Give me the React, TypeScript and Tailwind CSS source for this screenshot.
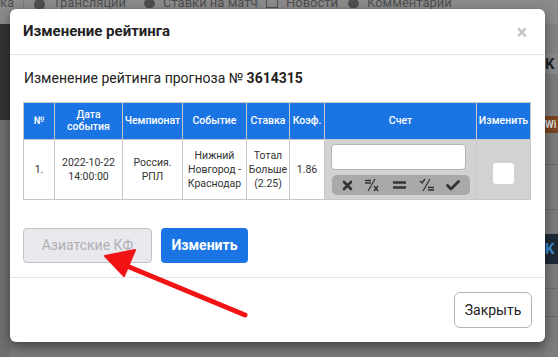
import React from "react";

const font = { fontFamily: "Roboto, 'Noto Sans', sans-serif" };

function ScoreIcon({ kind }: { kind: string }) {
  if (kind === "x")
    return (
      <svg width="11" height="11" viewBox="0 0 11 11">
        <path d="M2 2 L9 9 M9 2 L2 9" stroke="#333" strokeWidth="2.6" strokeLinecap="round" />
      </svg>
    );
  if (kind === "eqx")
    return (
      <svg width="16" height="14" viewBox="0 0 16 14">
        <path d="M1 2.5 H7 M1 5 H7" stroke="#333" strokeWidth="1.4" />
        <path d="M4 13 L11 1" stroke="#333" strokeWidth="1.2" />
        <path d="M10 8 L14 13 M14 8 L10 13" stroke="#333" strokeWidth="1.4" />
      </svg>
    );
  if (kind === "eq")
    return (
      <svg width="15" height="10" viewBox="0 0 15 10">
        <path d="M1 2.5 H14 M1 7.5 H14" stroke="#333" strokeWidth="2.6" />
      </svg>
    );
  if (kind === "veq")
    return (
      <svg width="16" height="14" viewBox="0 0 16 14">
        <path d="M1 3 L3 5 L6 1" stroke="#333" strokeWidth="1.4" fill="none" />
        <path d="M4 13 L11 1" stroke="#333" strokeWidth="1.2" />
        <path d="M9 9.5 H15 M9 12 H15" stroke="#333" strokeWidth="1.4" />
      </svg>
    );
  return (
    <svg width="14" height="11" viewBox="0 0 14 11">
      <path d="M1.5 5.5 L5 9 L12.5 1.5" stroke="#333" strokeWidth="2.8" fill="none" strokeLinecap="round" strokeLinejoin="round" />
    </svg>
  );
}

function NavItem({ icon, label, className }: { icon: React.ReactNode; label: string; className: string }) {
  return (
    <div className={"flex items-start gap-2 border-r border-[#7a7a7a] h-full whitespace-nowrap shrink-0 " + className}>
      <span className="mt-[-1px]">{icon}</span>
      <span className="mt-[-7px]">{label}</span>
    </div>
  );
}

export default function App() {
  const th = "border border-[#c7c7c7] bg-[#1b74e4] text-white font-medium text-[10.5px] leading-[12px] text-center px-0";
  const td = "border border-[#c7c7c7] text-[#333] text-[10.5px] leading-[14px] text-center px-0";

  return (
    <div className="relative w-[558px] h-[357px] overflow-hidden bg-[#777]" style={font}>
      {/* page behind the overlay */}
      <div className="flex flex-col h-full">
        <div className="flex items-start h-[24px] bg-[#8b8b8b] text-[#4f4f4f] text-[13px] leading-[20px] overflow-hidden">
          <div className="w-[24px] shrink-0 border-r border-[#7a7a7a] h-full">
            <span className="block mt-[-7px]">ка</span>
          </div>
          <NavItem
            className="w-[101px] pl-[10px]"
            icon={<span className="block w-[11px] h-[11px] rounded-full bg-[#4f4f4f]" />}
            label="Трансляции"
          />
          <NavItem
            className="w-[133px] pl-[19px]"
            icon={<span className="block w-[11px] h-[9px] rounded-full bg-[#4f4f4f]" />}
            label="Ставки на матч"
          />
          <NavItem
            className="w-[80px] pl-[8px]"
            icon={<span className="block w-[12px] h-[9px] border border-[#4f4f4f]" />}
            label="Новости"
          />
          <NavItem
            className="w-[105px] pl-[10px]"
            icon={<span className="block w-[11px] h-[9px] rounded-full bg-[#4f4f4f]" />}
            label="Комментарии"
          />
        </div>
        <div className="flex flex-1">
          <div className="w-[10px] flex flex-col">
            <div className="h-[96px] bg-[#343434]" />
            <div className="flex-1 bg-[#6f6f6f]" />
          </div>
          <div className="flex-1" />
          <div className="w-[13px] flex flex-col bg-[#7c7c7c]">
            <div className="h-[30px] bg-[#838383]" />
            <div className="h-[20px] bg-[#8a8a8a] text-[#222] font-bold text-[15px] leading-[20px] overflow-hidden">K</div>
            <div className="h-[42px]" />
            <div className="h-[17px] bg-[#7a4520] text-[#ddd] text-[10px] leading-[17px] font-bold overflow-hidden">Wi</div>
            <div className="h-[32px] border-b border-[#6a6a6a]" />
            <div className="h-[45px] border-b border-[#6a6a6a]" />
            <div className="h-[24px]" />
            <div className="h-[30px] bg-[#1d2a36] text-[#3a8ad0] font-bold text-[15px] leading-[30px] overflow-hidden">K</div>
            <div className="h-[25px] border-b border-[#6a6a6a]" />
            <div className="h-[28px] border-b border-[#6a6a6a]" />
          </div>
        </div>
      </div>

      {/* modal */}
      <div className="absolute inset-0 pl-[10px] pt-[9px]">
        <div className="w-[535px] h-[333px] bg-white rounded-[6px] shadow-[0_4px_12px_rgba(0,0,0,0.45)] flex flex-col">
          <div className="flex items-center justify-between h-[46px] px-[12px] border-b border-[#e3e3e3]">
            <span className="text-[15px] font-bold text-[#222] pl-[1px]">Изменение рейтинга</span>
            <span className="text-[20px] leading-none text-[#c4c4c4] font-bold pr-[6px]">×</span>
          </div>
          <div className="flex flex-col px-[13px] pt-[12px] pb-[14px] border-b border-[#e3e3e3] flex-1">
            <div className="text-[14px] leading-[22px] text-[#222] pl-[1px]">
              Изменение рейтинга прогноза № <b>3614315</b>
            </div>
            <table className="table-fixed border-collapse w-[507px] mt-[13px]">
              <colgroup>
                <col className="w-[31px]" />
                <col className="w-[68px]" />
                <col className="w-[60px]" />
                <col className="w-[64px]" />
                <col className="w-[43px]" />
                <col className="w-[35px]" />
                <col className="w-[152px]" />
                <col className="w-[54px]" />
              </colgroup>
              <thead>
                <tr className="h-[37px]">
                  <th className={th}>№</th>
                  <th className={th}>Дата<br />события</th>
                  <th className={th}>Чемпионат</th>
                  <th className={th}>Событие</th>
                  <th className={th}>Ставка</th>
                  <th className={th}>Коэф.</th>
                  <th className={th}>Счет</th>
                  <th className={th}>Изменить</th>
                </tr>
              </thead>
              <tbody>
                <tr className="h-[60px]">
                  <td className={td}>1.</td>
                  <td className={td}>2022-10-22<br />14:00:00</td>
                  <td className={td}>Россия.<br />РПЛ</td>
                  <td className={td}>Нижний<br />Новгород -<br />Краснодар</td>
                  <td className={td}>Тотал<br />Больше<br />(2.25)</td>
                  <td className={td}>1.86</td>
                  <td className="border border-[#c7c7c7] bg-[#d2d2d2] px-[6px] py-[4px]">
                    <div className="flex flex-col gap-[5px]">
                      <div className="h-[26px] w-[135px] bg-white rounded-[4px] border border-[#b5b5b5]" />
                      <div className="h-[20px] w-[138px] ml-[1px] bg-[#a9a9a9] rounded-[5px] flex items-center justify-around px-[4px]">
                        <ScoreIcon kind="x" />
                        <ScoreIcon kind="eqx" />
                        <ScoreIcon kind="eq" />
                        <ScoreIcon kind="veq" />
                        <ScoreIcon kind="v" />
                      </div>
                    </div>
                  </td>
                  <td className="border border-[#c7c7c7] bg-[#d2d2d2]">
                    <div className="flex justify-center pt-[8px]">
                      <div className="w-[21px] h-[21px] bg-white rounded-[3px]" />
                    </div>
                  </td>
                </tr>
              </tbody>
            </table>
            <div className="flex gap-[9px] mt-auto">
              <button className="h-[35px] w-[129px] rounded-[4px] border border-[#c2c2c6] bg-[#e9e9ed] text-[#b0b0b4] text-[14px]">
                Азиатские КФ
              </button>
              <button className="h-[35px] w-[87px] rounded-[4px] bg-[#1b74e4] text-white text-[14px] font-bold">
                Изменить
              </button>
            </div>
          </div>
          <div className="flex justify-end items-center h-[64px] px-[13px]">
            <button className="h-[36px] w-[78px] rounded-[6px] border border-[#b5b5b5] bg-white text-[#222] text-[14px]">
              Закрыть
            </button>
          </div>
        </div>
      </div>

      {/* red arrow annotation */}
      <svg className="absolute left-0 top-0" width="558" height="357">
        <path d="M245 315 L122 264" stroke="#f21414" strokeWidth="5" strokeLinecap="round" />
        <path d="M105 256 L135 250 L124 276 Z" fill="#f21414" stroke="#f21414" strokeWidth="2" strokeLinejoin="round" />
      </svg>
    </div>
  );
}
